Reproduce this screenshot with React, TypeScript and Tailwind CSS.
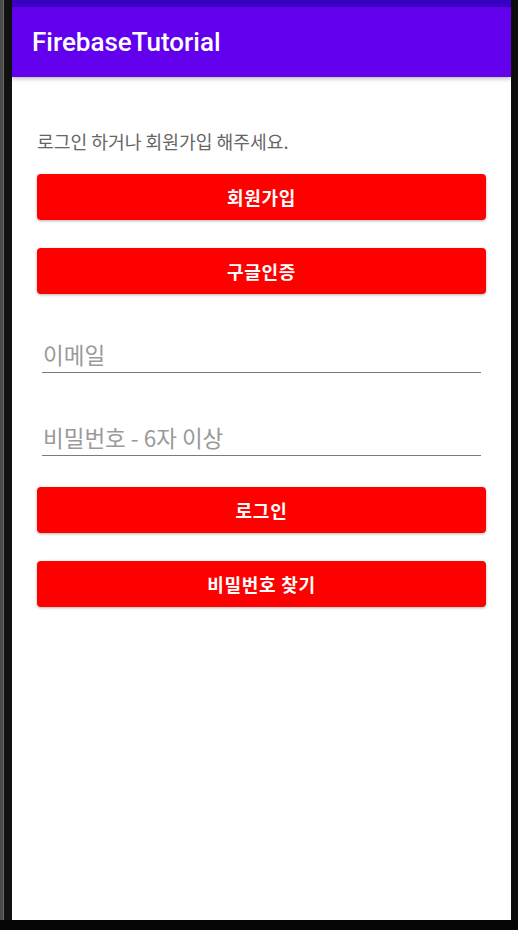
import React from "react";

const ko = { fontFamily: '"Noto Sans CJK KR", "Noto Sans", sans-serif' };

function RedButton({ label }: { label: string }) {
  return (
    <button
      className="w-full h-[46px] rounded-[4px] bg-[#ff0000] text-white text-[18px] font-bold tracking-[0.04em] flex items-center justify-center shadow-[0_1px_3px_rgba(0,0,0,0.3)]"
      style={ko}
    >
      {label}
    </button>
  );
}

function Field({ placeholder }: { placeholder: string }) {
  return (
    <div className="mx-[5px] border-b-[1.5px] border-[#7a7a7a] h-[38px] flex items-end pb-[4px]">
      <span className="text-[22.5px] leading-[28px] text-[#9a9a9a] pl-[1px]" style={ko}>
        {placeholder}
      </span>
    </div>
  );
}

export default function App() {
  return (
    <div className="w-[518px] h-[930px] bg-[#050505] flex flex-col">
      <div className="flex flex-1">
        <div className="w-[12px] flex">
          <div className="w-[3px] bg-[#4a4a4a]" />
          <div className="w-[1px] bg-[#6a6a6a]" />
          <div className="flex-1 bg-[#111111]" />
        </div>
        <div className="w-[499px] bg-white flex flex-col">
          <div className="h-[7px] bg-[#3a00c2]" />
          <div className="h-[70px] bg-[#6200ee] flex items-center pl-[20px] shadow-[0_2px_4px_rgba(0,0,0,0.25)] relative z-10">
            <span
              className="text-white text-[26px] font-medium"
              style={{ fontFamily: 'Roboto, "Noto Sans", sans-serif' }}
            >
              FirebaseTutorial
            </span>
          </div>
          <div className="flex flex-col px-[25px]">
            <p className="mt-[52px] text-[18.2px] leading-[24px] text-[#666666]" style={ko}>
              로그인 하거나 회원가입 해주세요.
            </p>
            <div className="mt-[21px]">
              <RedButton label="회원가입" />
            </div>
            <div className="mt-[28px]">
              <RedButton label="구글인증" />
            </div>
            <div className="mt-[41px]">
              <Field placeholder="이메일" />
            </div>
            <div className="mt-[45px]">
              <Field placeholder="비밀번호 - 6자 이상" />
            </div>
            <div className="mt-[31px]">
              <RedButton label="로그인" />
            </div>
            <div className="mt-[28px]">
              <RedButton label="비밀번호 찾기" />
            </div>
          </div>
        </div>
        <div className="w-[7px] bg-[#0d0d0d]" />
      </div>
      <div className="h-[10px] bg-[#050505]" />
    </div>
  );
}
